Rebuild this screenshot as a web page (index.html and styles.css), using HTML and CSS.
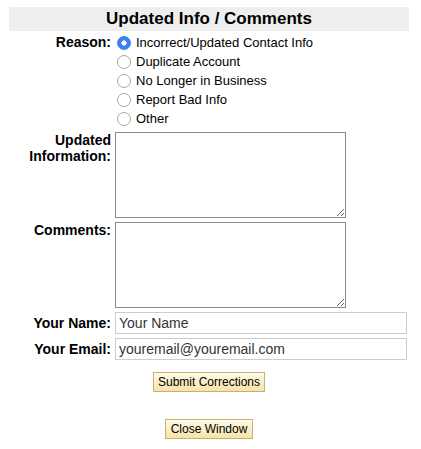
FILE: index.html
```html
<!DOCTYPE html>
<html>
<head>
<meta charset="utf-8">
<link rel="stylesheet" href="styles.css">
</head>
<body>
<form class="form">
  <div class="title">Updated Info / Comments</div>
  <div class="rows">
    <div class="label label-reason">Reason:</div>
    <div class="radios">
      <label class="opt"><input type="radio" name="reason" checked><span>Incorrect/Updated Contact Info</span></label>
      <label class="opt"><input type="radio" name="reason"><span>Duplicate Account</span></label>
      <label class="opt"><input type="radio" name="reason"><span>No Longer in Business</span></label>
      <label class="opt"><input type="radio" name="reason"><span>Report Bad Info</span></label>
      <label class="opt"><input type="radio" name="reason"><span>Other</span></label>
    </div>
    <div class="label label-top">Updated<br>Information:</div>
    <div><textarea class="area"></textarea></div>
    <div class="label label-top">Comments:</div>
    <div><textarea class="area"></textarea></div>
    <div class="label label-mid">Your Name:</div>
    <div><input class="field" type="text" value="Your Name"></div>
    <div class="label label-mid">Your Email:</div>
    <div><input class="field" type="text" value="youremail@youremail.com"></div>
  </div>
  <div class="actions">
    <button type="button" class="btn btn-submit">Submit Corrections</button>
  </div>
  <div class="actions actions-close">
    <button type="button" class="btn btn-close">Close Window</button>
  </div>
</form>
</body>
</html>
```

FILE: styles.css
```css
html, body {
  margin: 0;
  padding: 0;
  background: #fff;
}
body {
  font-family: "Liberation Sans", Arial, sans-serif;
  color: #000;
}
.form {
  width: 400px;
  margin: 7px 0 0 9px;
}
.title {
  background: #eeeeee;
  height: 24px;
  line-height: 24px;
  font-size: 17px;
  font-weight: bold;
  text-align: center;
}
.rows {
  display: grid;
  grid-template-columns: 102px 1fr;
  column-gap: 4px;
  row-gap: 4px;
  margin-top: 2px;
}
.label {
  font-size: 14px;
  font-weight: bold;
  text-align: right;
  line-height: 16px;
}
.label-reason {
  line-height: 19px;
}
.label-top {
  padding-top: 0;
}
.label-mid {
  display: flex;
  align-items: center;
  justify-content: flex-end;
}
.radios {
  display: flex;
  flex-direction: column;
}
.opt {
  display: flex;
  align-items: center;
  height: 19px;
  font-size: 13px;
}
.opt input {
  appearance: none;
  -webkit-appearance: none;
  width: 14px;
  height: 14px;
  margin: 0 5px 0 2px;
  border: 1px solid #a8a8a8;
  border-radius: 50%;
  background: #fff;
  box-sizing: border-box;
  flex: none;
}
.opt input:checked {
  border-color: #3b82f6;
  background: radial-gradient(circle, #fff 0 2.3px, #3b82f6 2.9px);
}
.area {
  display: block;
  box-sizing: border-box;
  width: 231px;
  height: 86px;
  margin: 0;
  border: 1px solid #8a8a8a;
  padding: 2px;
  font-family: "Liberation Sans", Arial, sans-serif;
  font-size: 13px;
}
.field {
  display: block;
  box-sizing: border-box;
  width: 292px;
  height: 22px;
  margin: 0;
  border: 1px solid #cccccc;
  padding: 0 3px;
  font-family: "Liberation Sans", Arial, sans-serif;
  font-size: 14px;
  color: #333;
}
.actions {
  display: flex;
  justify-content: center;
  margin-top: 12px;
}
.actions-close {
  margin-top: 27px;
}
.btn {
  font-family: "Liberation Sans", Arial, sans-serif;
  font-size: 12px;
  color: #000;
  height: 20px;
  padding: 0 4px;
  border: 1px solid #c4b078;
  border-radius: 0;
  background: linear-gradient(#fffbea, #f6e3a6);
  line-height: 18px;
}
.btn-close {
  padding: 0 5px;
}
```
